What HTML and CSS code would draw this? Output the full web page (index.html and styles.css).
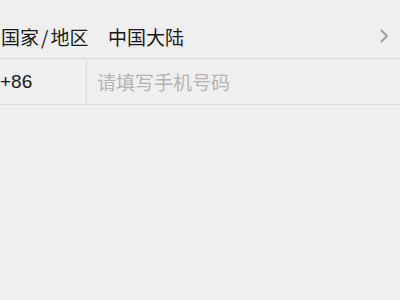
FILE: index.html
```html
<!DOCTYPE html>
<html lang="zh-CN">
<head>
<meta charset="utf-8">
<link rel="stylesheet" href="styles.css">
</head>
<body>
<div class="form">
  <div class="row region">
    <span class="label">国家<span class="slash">/</span>地区</span>
    <span class="value">中国大陆</span>
    <svg class="chevron" width="10" height="16" viewBox="0 0 10 16"><path d="M2 2 L8 8 L2 14" fill="none" stroke="#9a9a9a" stroke-width="1.8"/></svg>
  </div>
  <div class="row phone">
    <span class="code">+86</span>
    <span class="placeholder">请填写手机号码</span>
  </div>
</div>
</body>
</html>
```

FILE: styles.css
```css
html, body {
  margin: 0;
  padding: 0;
  background: #efefef;
}
body {
  font-family: "Noto Sans CJK SC", sans-serif;
  font-size: 19px;
  color: #1a1a1a;
}
.form {
  padding-top: 14px;
}
.row {
  display: flex;
  align-items: center;
  border-bottom: 1px solid #d9d9d9;
}
.region {
  height: 44px;
  padding-right: 11px;
}
.label {
  width: 108px;
  padding-left: 1px;
  box-sizing: border-box;
}
.slash {
  margin: 0 2px;
}
.value {
  flex: 1;
}
.chevron {
  display: block;
}
.phone {
  height: 45px;
  align-items: stretch;
}
.code {
  width: 86px;
  border-right: 1px solid #dcdcdc;
  display: flex;
  align-items: center;
  font-family: "Liberation Sans", sans-serif;
}
.placeholder {
  display: flex;
  align-items: center;
  padding-left: 10px;
  color: #b3b3b3;
}
```
